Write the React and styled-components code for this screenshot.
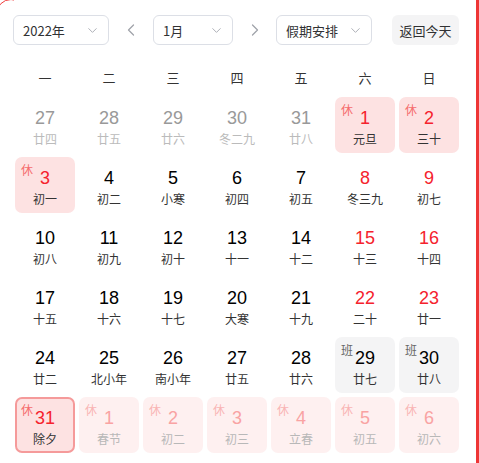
import React from "react";
import styled, { createGlobalStyle } from "styled-components";
import { ChevronDown, ChevronLeft, ChevronRight } from "lucide-react";

const GlobalStyle = createGlobalStyle`
  html, body {
    margin: 0;
    padding: 0;
    background: #fff;
  }
  body {
    font-family: "Liberation Sans", "Noto Sans CJK SC", sans-serif;
  }
`;

const Page = styled.div`
  position: relative;
  width: 476px;
  height: 463px;
  border-right: 3px solid #ee3535;
  background: #fff;
  overflow: hidden;
`;

const CornerClip = styled.div`
  position: absolute;
  left: 0;
  top: 0;
  width: 14px;
  height: 7px;
  overflow: hidden;
`;

const CornerArc = styled.div`
  position: absolute;
  left: -4px;
  top: -1px;
  width: 30px;
  height: 30px;
  box-sizing: border-box;
  border-radius: 50%;
  border: 1.5px solid #f03c3c;
`;

const Header = styled.div`
  display: flex;
  align-items: center;
  padding: 15px 0 0 13px;
  height: 30px;
`;

const Select = styled.div`
  box-sizing: border-box;
  width: ${(p) => p.$w}px;
  height: 30px;
  display: flex;
  align-items: center;
  justify-content: space-between;
  padding: 0 8px 0 9px;
  border: 1px solid #dcdfe6;
  border-radius: 6px;
  font-family: "Noto Sans CJK SC", sans-serif;
  font-size: 13px;
  color: #303133;
`;

const Arrow = styled.div`
  width: ${(p) => p.$w}px;
  display: flex;
  justify-content: center;
  color: #a0a3aa;
`;

const TodayButton = styled.div`
  margin-left: 20px;
  width: 67px;
  height: 30px;
  display: flex;
  align-items: center;
  justify-content: center;
  background: #f4f4f5;
  border-radius: 6px;
  font-family: "Noto Sans CJK SC", sans-serif;
  font-size: 13px;
  color: #303133;
`;

const Grid = styled.div`
  display: grid;
  grid-template-columns: repeat(7, 60px);
  column-gap: 4px;
  row-gap: 4px;
  padding-left: 15px;
`;

const WeekHead = styled.div`
  height: 30px;
  margin-top: 17px;
  margin-bottom: 1px;
  display: flex;
  align-items: center;
  justify-content: center;
  font-family: "Noto Sans CJK SC", sans-serif;
  font-size: 13px;
  color: #333;
`;

const cellBg = {
  rest: "#fde2e2",
  work: "#f4f4f5",
  restDim: "#fef0f0",
};

const Cell = styled.div`
  position: relative;
  box-sizing: border-box;
  height: 56px;
  border-radius: 7px;
  background: ${(p) => cellBg[p.$kind] || "transparent"};
  border: ${(p) => (p.$selected ? "2px solid #f59a9a" : "none")};
  display: flex;
  flex-direction: column;
  align-items: center;
  padding-top: ${(p) => (p.$selected ? 9 : 11)}px;
`;

const Tag = styled.span`
  position: absolute;
  left: ${(p) => (p.$selected ? 4 : 6)}px;
  top: ${(p) => (p.$selected ? 2 : 4)}px;
  font-family: "Noto Sans CJK SC", sans-serif;
  font-size: 12px;
  color: ${(p) => p.$color};
`;

const Num = styled.div`
  font-size: 18px;
  line-height: 20px;
  color: ${(p) => p.$color};
`;

const Lunar = styled.div`
  margin-top: 3px;
  font-family: "Noto Sans CJK SC", sans-serif;
  font-size: 12px;
  line-height: 16px;
  color: ${(p) => p.$color};
`;

const weekdays = ["一", "二", "三", "四", "五", "六", "日"];

// t: prev | normal | red | rest | work | restDim
const days = [
  [27, "廿四", "prev"], [28, "廿五", "prev"], [29, "廿六", "prev"], [30, "冬二九", "prev"], [31, "廿八", "prev"], [1, "元旦", "rest"], [2, "三十", "rest"],
  [3, "初一", "rest"], [4, "初二"], [5, "小寒"], [6, "初四"], [7, "初五"], [8, "冬三九", "red"], [9, "初七", "red"],
  [10, "初八"], [11, "初九"], [12, "初十"], [13, "十一"], [14, "十二"], [15, "十三", "red"], [16, "十四", "red"],
  [17, "十五"], [18, "十六"], [19, "十七"], [20, "大寒"], [21, "十九"], [22, "二十", "red"], [23, "廿一", "red"],
  [24, "廿二"], [25, "北小年"], [26, "南小年"], [27, "廿五"], [28, "廿六"], [29, "廿七", "work"], [30, "廿八", "work"],
  [31, "除夕", "rest", true], [1, "春节", "restDim"], [2, "初二", "restDim"], [3, "初三", "restDim"], [4, "立春", "restDim"], [5, "初五", "restDim"], [6, "初六", "restDim"],
];

const styleFor = (t) => {
  switch (t) {
    case "prev":
      return { num: "#999", lunar: "#bbb" };
    case "red":
      return { num: "#f5222d", lunar: "#333" };
    case "rest":
      return { num: "#f5222d", lunar: "#333", tag: "休", tagColor: "#f56c6c" };
    case "work":
      return { num: "#000", lunar: "#333", tag: "班", tagColor: "#666" };
    case "restDim":
      return { num: "#f9a3a3", lunar: "#b8b8b8", tag: "休", tagColor: "#f9b4b4" };
    default:
      return { num: "#000", lunar: "#333" };
  }
};

export default function App() {
  return (
    <Page>
      <GlobalStyle />
      <CornerClip>
        <CornerArc />
      </CornerClip>
      <Header>
        <Select $w={96}>
          <span>2022年</span>
          <ChevronDown size={15} color="#a8abb2" strokeWidth={1.5} />
        </Select>
        <Arrow $w={44}>
          <ChevronLeft size={20} strokeWidth={1.5} />
        </Arrow>
        <Select $w={80}>
          <span>1月</span>
          <ChevronDown size={15} color="#a8abb2" strokeWidth={1.5} />
        </Select>
        <Arrow $w={43}>
          <ChevronRight size={20} strokeWidth={1.5} />
        </Arrow>
        <Select $w={96}>
          <span>假期安排</span>
          <ChevronDown size={15} color="#a8abb2" strokeWidth={1.5} />
        </Select>
        <TodayButton>返回今天</TodayButton>
      </Header>
      <Grid>
        {weekdays.map((w) => (
          <WeekHead key={w}>{w}</WeekHead>
        ))}
        {days.map(([n, lunar, t, selected], i) => {
          const s = styleFor(t);
          return (
            <Cell key={i} $kind={t} $selected={selected}>
              {s.tag && (
                <Tag $color={s.tagColor} $selected={selected}>
                  {s.tag}
                </Tag>
              )}
              <Num $color={s.num}>{n}</Num>
              <Lunar $color={s.lunar}>{lunar}</Lunar>
            </Cell>
          );
        })}
      </Grid>
    </Page>
  );
}
